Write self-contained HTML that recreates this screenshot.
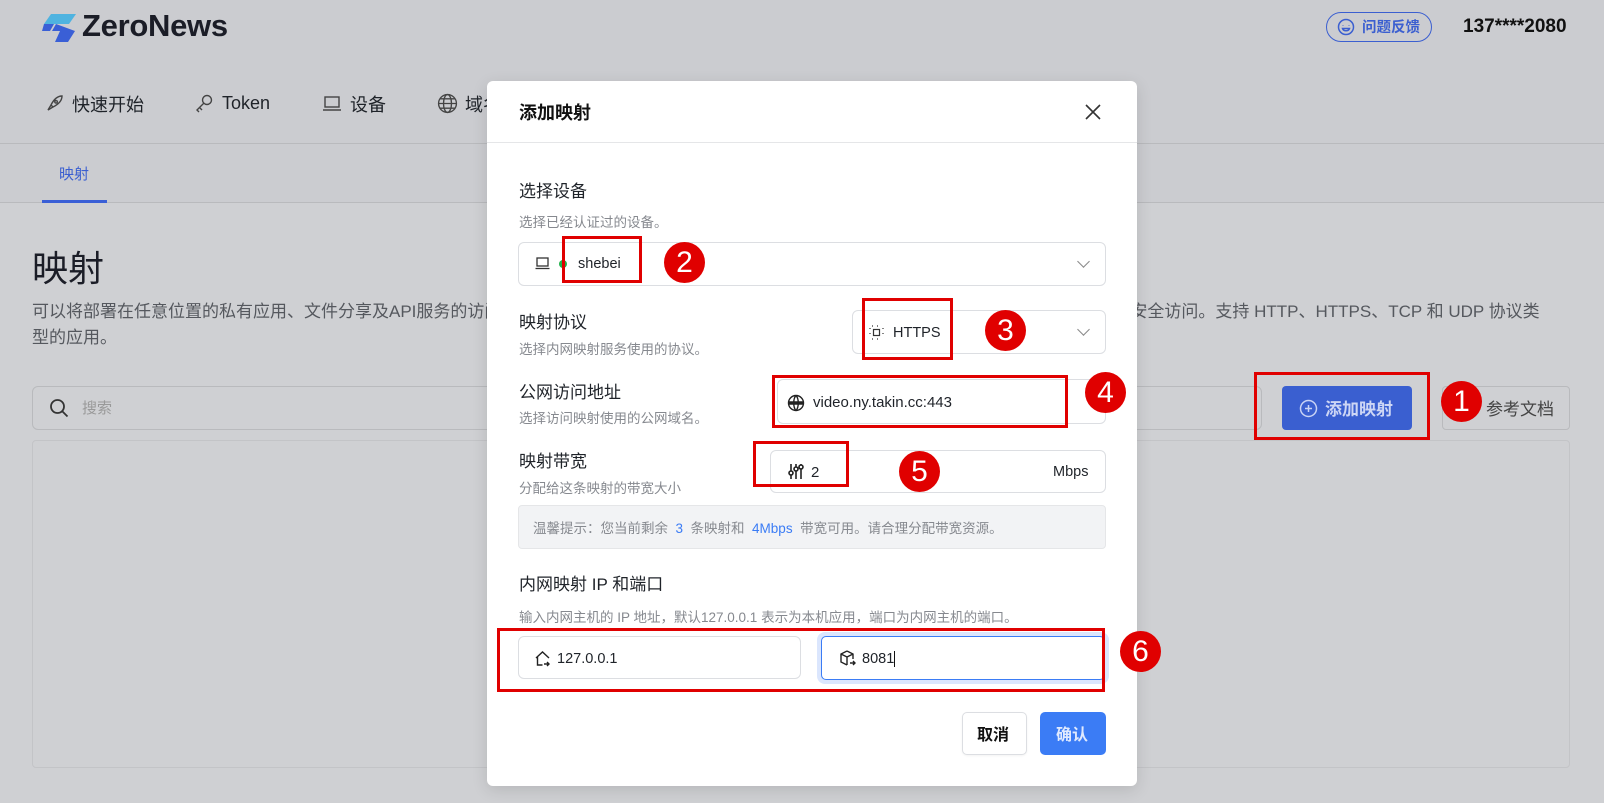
<!DOCTYPE html>
<html><head><meta charset="utf-8">
<style>
*{box-sizing:border-box;margin:0;padding:0}
body{width:1604px;height:803px;position:relative;overflow:hidden;background:#cfd0d3;font-family:"Liberation Sans","Noto Sans CJK SC",sans-serif;color:#1f2329}
.a{position:absolute}
.hdr{left:0;top:0;width:1604px;height:203px;background:#cbccd0;border-bottom:1px solid #b9babd}
.red{position:absolute;border:3px solid #e00000}
.num{position:absolute;width:41px;height:41px;border-radius:50%;background:#e00000;color:#fff;font-size:30px;line-height:41px;text-align:center;font-family:"Liberation Sans",sans-serif}
.lbl{position:absolute;left:519px;font-size:17px;color:#1f2329;margin-top:-2px}
.sub{position:absolute;left:519px;font-size:13.5px;color:#86898f;margin-top:-1px}
.box{position:absolute;border:1px solid #dcdee2;border-radius:6px;background:#fff}
.chev{position:absolute;width:9px;height:9px;border-right:1.5px solid #888;border-bottom:1.5px solid #888;transform:rotate(45deg)}
svg{position:absolute}
</style></head><body>
<div class="a hdr"></div>
<div class="a" style="left:0;top:143px;width:1604px;height:1px;background:#b9babd"></div>
<!-- logo -->
<svg style="left:42px;top:14px" width="36" height="28" viewBox="0 0 36 28"><path d="M9 0h25l-7 10H2z" fill="#4fb3e0"/><path d="M14 10l-4 7h8l-5 11h13l7-11z" fill="#3a5fd6"/><path d="M2 10h10l-4 7H0z" fill="#3a5fd6"/></svg>
<div class="a" style="left:82px;top:8px;font-size:31px;font-weight:bold;color:#1b1d27;letter-spacing:-0.3px">ZeroNews</div>
<!-- nav -->
<svg style="left:44px;top:94px" width="20" height="20" viewBox="0 0 20 20" fill="none" stroke="#444" stroke-width="1.4"><path d="M4 16l3-5 2 2-5 3zM7 11c3-6 7-9 11-9-0 4-3 8-9 11zM12 6.5a1.3 1.3 0 1 0 .1 0"/></svg>
<div class="a" style="left:72px;top:91px;font-size:18px">快速开始</div>
<svg style="left:194px;top:93px" width="20" height="20" viewBox="0 0 20 20" fill="none" stroke="#444" stroke-width="1.4"><circle cx="13" cy="7" r="4.5"/><path d="M10 10l-7 7 2 2M6 15l2 2"/></svg>
<div class="a" style="left:222px;top:93px;font-size:18px">Token</div>
<svg style="left:322px;top:95px" width="20" height="18" viewBox="0 0 20 18" fill="none" stroke="#444" stroke-width="1.4"><rect x="3" y="2" width="14" height="10"/><path d="M1 15h18"/></svg>
<div class="a" style="left:350px;top:91px;font-size:18px">设备</div>
<svg style="left:437px;top:93px" width="21" height="21" viewBox="0 0 20 20" fill="none" stroke="#444" stroke-width="1.3"><circle cx="10" cy="10" r="8.5"/><ellipse cx="10" cy="10" rx="3.8" ry="8.5"/><path d="M1.5 10h17M3 5.5h14M3 14.5h14"/></svg>
<div class="a" style="left:465px;top:91px;font-size:18px">域名</div>
<!-- right header -->
<div class="a" style="left:1326px;top:12px;width:106px;height:30px;border:1.5px solid #3b5fd0;border-radius:15px"></div>
<svg style="left:1337px;top:18px" width="18" height="18" viewBox="0 0 18 18" fill="none" stroke="#3b5fd0" stroke-width="1.5"><circle cx="9" cy="9" r="7.5"/><path d="M6 7v0.5M12 7v0.5M5.5 10.5h7c-1 3-6 3-7 0z"/></svg>
<div class="a" style="left:1362px;top:16px;font-size:14.5px;color:#3b5fd0;font-weight:bold">问题反馈</div>
<div class="a" style="left:1463px;top:16px;font-size:19px;font-weight:bold;color:#111">137****2080</div>
<!-- tab -->
<div class="a" style="left:59px;top:163px;font-size:15px;color:#3b5fd0">映射</div>
<div class="a" style="left:42px;top:200px;width:65px;height:3px;background:#3a5fd6"></div>
<!-- content -->
<div class="a" style="left:32px;top:240px;font-size:36px;color:#1b1d27">映射</div>
<div class="a" style="left:32px;top:299px;width:1570px;font-size:17px;line-height:26px;color:#55585e;white-space:nowrap">可以将部署在任意位置的私有应用、文件分享及API服务的访问地址安全地映射到公网上，让您可以随时随地在任何地方均能够方便快捷地通过公网安全访问。支持 HTTP、HTTPS、TCP 和 UDP 协议类<br>型的应用。</div>
<div class="a" style="left:32px;top:386px;width:1230px;height:44px;border:1px solid #b9babd;border-radius:6px"></div>
<svg style="left:49px;top:398px" width="20" height="20" viewBox="0 0 20 20" fill="none" stroke="#333" stroke-width="1.8"><circle cx="8.5" cy="8.5" r="6.5"/><path d="M13.5 13.5l5 5"/></svg>
<div class="a" style="left:82px;top:397px;font-size:15px;color:#999">搜索</div>
<div class="a" style="left:32px;top:440px;width:1538px;height:328px;border:1px solid #c3c4c7;border-radius:4px"></div>
<div class="a" style="left:1282px;top:386px;width:130px;height:44px;background:#3a5fd0;border-radius:4px"></div>
<svg style="left:1299px;top:399px" width="19" height="19" viewBox="0 0 19 19" fill="none" stroke="#c9d3f5" stroke-width="1.5"><circle cx="9.5" cy="9.5" r="8"/><path d="M9.5 6v7M6 9.5h7"/></svg>
<div class="a" style="left:1325px;top:395px;font-size:17px;font-weight:bold;color:#cdd6f5">添加映射</div>
<div class="red" style="left:1254px;top:372px;width:176px;height:68px"></div>
<div class="a" style="left:1442px;top:386px;width:128px;height:44px;border:1px solid #b9babd;border-radius:4px"></div>
<div class="a" style="left:1486px;top:395px;font-size:17px;color:#444">参考文档</div>
<div class="num" style="left:1441px;top:381px">1</div>
<!-- dialog -->
<div class="a" style="left:487px;top:81px;width:650px;height:705px;background:#fff;border-radius:6px;box-shadow:0 4px 16px rgba(0,0,0,.12)"></div>
<div class="a" style="left:487px;top:142px;width:650px;height:1px;background:#e5e6e8"></div>
<div class="a" style="left:519px;top:99px;font-size:18px;font-weight:bold;color:#111">添加映射</div>
<svg style="left:1085px;top:104px" width="16" height="16" viewBox="0 0 16 16" stroke="#333" stroke-width="1.6"><path d="M1 1l14 14M15 1L1 15"/></svg>

<div class="lbl" style="top:179px">选择设备</div>
<div class="sub" style="top:212px">选择已经认证过的设备。</div>
<div class="box" style="left:518px;top:242px;width:588px;height:44px"></div>
<svg style="left:535px;top:257px" width="15" height="13" viewBox="0 0 15 13" fill="none" stroke="#333" stroke-width="1.3"><rect x="2" y="1" width="11" height="8"/><path d="M0.5 11.5h14"/></svg>
<div class="a" style="left:559px;top:260px;width:8px;height:8px;border-radius:50%;background:#22b14c"></div>
<div class="a" style="left:578px;top:256px;font-size:14.5px">shebei</div>
<div class="chev" style="left:1079px;top:257px"></div>
<div class="red" style="left:562px;top:236px;width:80px;height:47px"></div>
<div class="num" style="left:664px;top:242px">2</div>

<div class="lbl" style="top:310px">映射协议</div>
<div class="sub" style="top:339px">选择内网映射服务使用的协议。</div>
<div class="box" style="left:852px;top:310px;width:254px;height:44px"></div>
<svg style="left:869px;top:325px" width="15" height="15" viewBox="0 0 15 15" fill="none" stroke="#333" stroke-width="1.2"><rect x="4.5" y="4.5" width="6" height="6"/><path d="M1 3v2M1 8v2M14 3v2M14 8v2M3 1h2M8 1h2M3 14h2M8 14h2" stroke-dasharray="1 1"/></svg>
<div class="a" style="left:893px;top:325px;font-size:14.5px">HTTPS</div>
<div class="chev" style="left:1079px;top:325px"></div>
<div class="red" style="left:862px;top:298px;width:91px;height:62px"></div>
<div class="num" style="left:985px;top:310px">3</div>

<div class="lbl" style="top:380px">公网访问地址</div>
<div class="sub" style="top:408px">选择访问映射使用的公网域名。</div>
<div class="box" style="left:777px;top:379px;width:329px;height:45px"></div>
<svg style="left:787px;top:394px" width="18" height="18" viewBox="0 0 18 18" fill="none" stroke="#222" stroke-width="1.4"><circle cx="9" cy="9" r="7.5"/><path d="M1.5 9h15" stroke-width="3.5" stroke="#222"/><path d="M9 1.5c-3 3-3 12 0 15M9 1.5c3 3 3 12 0 15"/></svg>
<div class="a" style="left:813px;top:394px;font-size:15px">video.ny.takin.cc:443</div>
<div class="red" style="left:772px;top:375px;width:296px;height:53px"></div>
<div class="num" style="left:1085px;top:372px">4</div>

<div class="lbl" style="top:449px">映射带宽</div>
<div class="sub" style="top:478px">分配给这条映射的带宽大小</div>
<div class="box" style="left:770px;top:450px;width:336px;height:43px"></div>
<svg style="left:788px;top:463px" width="16" height="17" viewBox="0 0 16 17" fill="none" stroke="#222" stroke-width="1.6"><path d="M3 1v15M8 1v15M13 1v15"/><circle cx="3" cy="10" r="2" fill="#fff"/><circle cx="8" cy="6" r="2" fill="#fff"/><circle cx="13" cy="4" r="2" fill="#fff"/></svg>
<div class="a" style="left:811px;top:464px;font-size:15px">2</div>
<div class="a" style="left:1053px;top:464px;font-size:14.5px">Mbps</div>
<div class="red" style="left:753px;top:441px;width:96px;height:46px"></div>
<div class="num" style="left:899px;top:451px">5</div>

<div class="a" style="left:518px;top:505px;width:588px;height:44px;background:#f2f3f5;border:1px solid #e5e6e8;border-radius:4px"></div>
<div class="a" style="left:533px;top:517px;font-size:13.5px;color:#86898f;white-space:pre">温馨提示：您当前剩余  <span style="color:#3b7cf5">3</span>  条映射和  <span style="color:#3b7cf5">4Mbps</span>  带宽可用。请合理分配带宽资源。</div>

<div class="lbl" style="top:572px">内网映射 IP 和端口</div>
<div class="sub" style="top:607px">输入内网主机的 IP 地址，默认127.0.0.1 表示为本机应用，端口为内网主机的端口。</div>
<div class="box" style="left:518px;top:636px;width:283px;height:43px"></div>
<svg style="left:534px;top:650px" width="17" height="17" viewBox="0 0 17 17" fill="none" stroke="#222" stroke-width="1.4"><path d="M2 8L8.5 2 15 8M3.5 7v8h5M13 12l2 2-2 2M10 14h5"/></svg>
<div class="a" style="left:557px;top:651px;font-size:14.5px">127.0.0.1</div>
<div class="a" style="left:817px;top:632px;width:292px;height:52px;border-radius:8px;background:#dbe6fd"></div>
<div class="a" style="left:821px;top:636px;width:284px;height:44px;border:1.5px solid #3b7cf5;border-radius:5px;background:#fff"></div>
<svg style="left:839px;top:650px" width="17" height="17" viewBox="0 0 17 17" fill="none" stroke="#222" stroke-width="1.4"><path d="M8 1l6 3v5M8 1L2 4v8l6 3M2 4l6 3 6-3M8 7v8M11 13h5M14 11l2 2-2 2"/></svg>
<div class="a" style="left:862px;top:651px;font-size:14.5px">808<span style="border-right:1.5px solid #111">1</span></div>
<div class="red" style="left:497px;top:628px;width:608px;height:64px"></div>
<div class="num" style="left:1120px;top:631px">6</div>

<div class="a" style="left:962px;top:712px;width:65px;height:43px;border:1px solid #dcdee2;border-radius:5px;background:#fff;box-shadow:0 1px 2px rgba(0,0,0,.05)"></div>
<div class="a" style="left:977px;top:721px;font-size:16px;font-weight:bold;color:#111">取消</div>
<div class="a" style="left:1040px;top:712px;width:66px;height:43px;border-radius:5px;background:#3b7cf5"></div>
<div class="a" style="left:1056px;top:721px;font-size:16px;font-weight:bold;color:#e0eafe">确认</div>
</body></html>
